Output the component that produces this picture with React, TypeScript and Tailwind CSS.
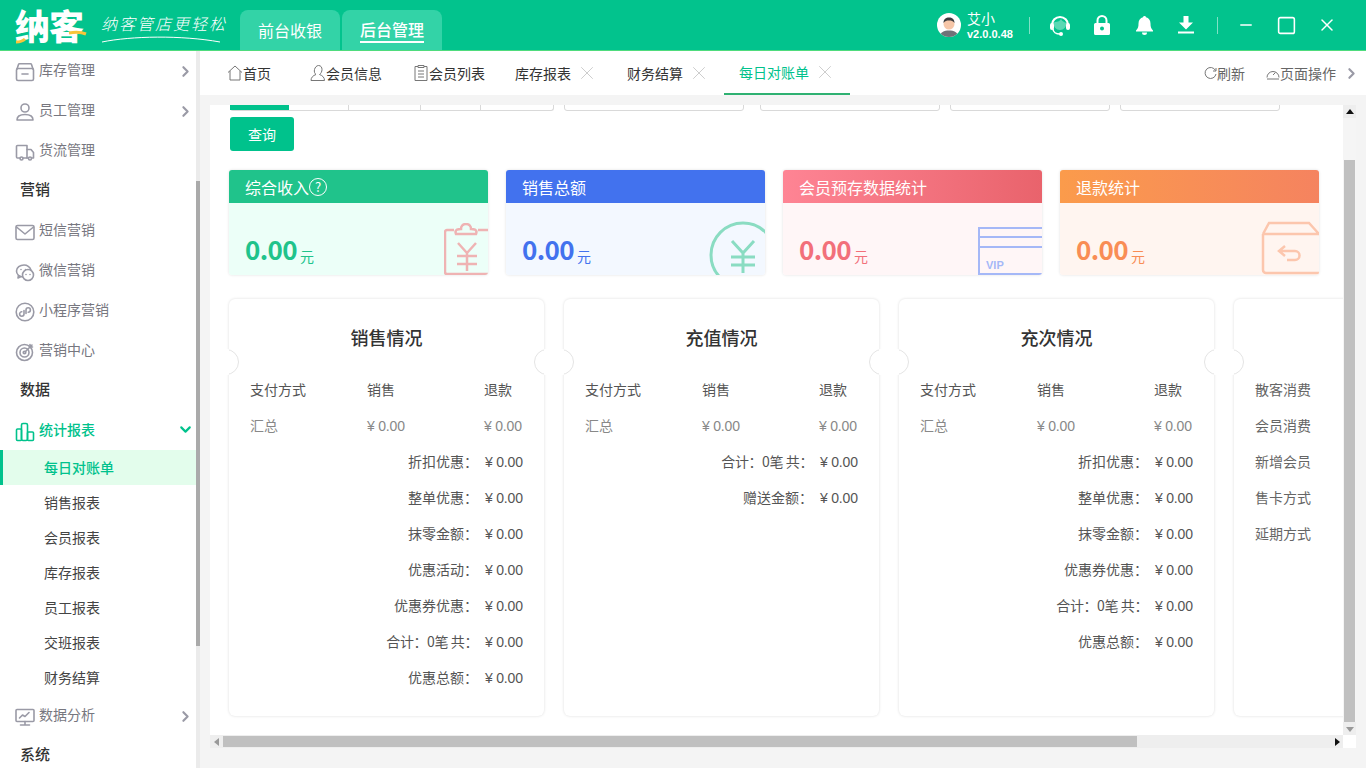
import React from 'react';
import { ChevronDown, ChevronRight, Minus, Square, X } from 'lucide-react';

const FONT = "font-['Noto_Sans_CJK_SC','Microsoft_YaHei',sans-serif]";

/* sidebar icons */
const Ico: React.FC<{ children: React.ReactNode; color?: string }> = ({ children, color = '#9a9aa6' }) => (
  <svg width="20" height="20" viewBox="0 0 20 20" fill="none" stroke={color} strokeWidth="1.6" strokeLinecap="round" strokeLinejoin="round">
    {children}
  </svg>
);

const sideIcons: Record<string, React.ReactNode> = {
  box: (
    <Ico>
      <path d="M2 7l1.5-4.500a1 1 0 011-.7h11a1 1 0 011 .7L18 7" />
      <rect x="1.500" y="6.500" width="17" height="12" rx="1.500" />
      <path d="M7 12h6" />
    </Ico>
  ),
  user: (
    <Ico>
      <circle cx="10" cy="6" r="4" />
      <path d="M2 18c0-3.500 3-5.500 8-5.500s8 2 8 5.500z" />
    </Ico>
  ),
  truck: (
    <Ico>
      <path d="M5 16H2.500a1 1 0 01-1-1V4.500a1 1 0 011-1H12v12.500H8" />
      <path d="M12 7.500h4l2.500 3V16h-2M12 16h1" />
      <circle cx="6.500" cy="16.500" r="1.500" />
      <circle cx="15" cy="16.500" r="1.500" />
    </Ico>
  ),
  mail: (
    <Ico>
      <rect x="1" y="3.500" width="18" height="14" rx="1.500" />
      <path d="M1.500 5l8.500 7 8.500-7" />
    </Ico>
  ),
  wechat: (
    <Ico>
      <path d="M7.500 15C4 14.500 1.500 12 1.500 9 1.500 5.500 5 3 9 3c3 0 5.800 2 7 5" />
      <path d="M3.500 13.500L3 16l2.500-1.300" />
      <circle cx="13" cy="13" r="5.500" />
      <path d="M11 12.500h.01M15 12.500h.01M6 7.500h.01M10.500 7.500h.01" />
    </Ico>
  ),
  mini: (
    <Ico>
      <circle cx="10" cy="10" r="8.800" />
      <path d="M9 8.500v3.500a2.200 2.200 0 11-2.200-2.200M11 11.500V8a2.200 2.200 0 112.200 2.200" />
    </Ico>
  ),
  target: (
    <Ico>
      <circle cx="9.500" cy="10.500" r="8" />
      <circle cx="9.500" cy="10.500" r="4.500" />
      <circle cx="9.500" cy="10.500" r="1.300" />
      <path d="M10 10L17 3M15 2.500V5h2.500" />
    </Ico>
  ),
  chart: (
    <Ico color="#00c28c">
      <rect x="1.500" y="7" width="5" height="11.500" rx="1" />
      <rect x="6.500" y="1.500" width="6" height="17" rx="1.500" />
      <rect x="12.500" y="10" width="6" height="8.500" rx="1" />
    </Ico>
  ),
  monitor: (
    <Ico>
      <rect x="1" y="2.500" width="18" height="12" rx="1" />
      <path d="M10 14.500v3.500M5.500 18h9M4.500 11l3-3 2.500 1.500L14 5.500" />
    </Ico>
  ),
};

type SideRow =
  | { kind: 'item'; label: string; icon: string; arrow?: boolean; open?: boolean }
  | { kind: 'head'; label: string }
  | { kind: 'sub'; label: string; active?: boolean };

const sideRows: SideRow[] = [
  { kind: 'item', label: '库存管理', icon: 'box', arrow: true },
  { kind: 'item', label: '员工管理', icon: 'user', arrow: true },
  { kind: 'item', label: '货流管理', icon: 'truck' },
  { kind: 'head', label: '营销' },
  { kind: 'item', label: '短信营销', icon: 'mail' },
  { kind: 'item', label: '微信营销', icon: 'wechat' },
  { kind: 'item', label: '小程序营销', icon: 'mini' },
  { kind: 'item', label: '营销中心', icon: 'target' },
  { kind: 'head', label: '数据' },
  { kind: 'item', label: '统计报表', icon: 'chart', open: true },
  { kind: 'sub', label: '每日对账单', active: true },
  { kind: 'sub', label: '销售报表' },
  { kind: 'sub', label: '会员报表' },
  { kind: 'sub', label: '库存报表' },
  { kind: 'sub', label: '员工报表' },
  { kind: 'sub', label: '交班报表' },
  { kind: 'sub', label: '财务结算' },
  { kind: 'item', label: '数据分析', icon: 'monitor', arrow: true },
  { kind: 'head', label: '系统' },
];

const Sidebar = () => (
  <div className="flex w-[200px] h-full shrink-0 overflow-hidden">
    <div className="w-[196px] h-full bg-white overflow-hidden shrink-0">
      <div className="-mt-px">
        {sideRows.map((row) => {
          if (row.kind === 'head') {
            return (
              <div key={row.label} className="h-10 pl-5 pb-[2px] flex items-center text-[15px] font-medium text-[#333]">
                {row.label}
              </div>
            );
          }
          if (row.kind === 'sub') {
            return (
              <div
                key={row.label}
                className={
                  row.active
                    ? 'h-[35px] pl-[41px] pb-[2px] flex items-center text-sm font-medium text-[#00c28c] bg-[#e3fdec] border-l-[3px] border-[#00c28c]'
                    : 'h-[35px] pl-11 pb-[2px] flex items-center text-sm text-[#444]'
                }
              >
                {row.label}
              </div>
            );
          }
          return (
            <div key={row.label} className="h-10 pl-[15px] pr-[2px] pb-[2px] flex items-center">
              <span className="pt-[6px]">{sideIcons[row.icon]}</span>
              <span className={row.open ? 'ml-1 text-sm font-medium text-[#00c28c]' : 'ml-1 text-sm text-[#77777f]'}>{row.label}</span>
              {row.arrow && (
                <span className="ml-auto pt-[4px]">
                  <ChevronRight className="text-[#9a9aa6]" size={17} strokeWidth={3} />
                </span>
              )}
              {row.open && <ChevronDown className="ml-auto text-[#00c28c]" size={17} strokeWidth={3} />}
            </div>
          );
        })}
      </div>
    </div>
    <div className="w-1 h-full bg-[#ebebeb] pt-[130px]">
      <div className="w-1 h-[465px] bg-[#aaaaaa]" />
    </div>
  </div>
);

const HeaderBar = () => (
  <div className="h-[51px] bg-[#02c38d] border-b border-[#4fdc7d] flex items-stretch text-white shrink-0">
    {/* logo */}
    <div className="w-[240px] shrink-0 flex items-center pl-[15px]">
      <div className="relative w-[72px] h-[40px]">
        <span className="text-[35px] leading-[40px] font-black tracking-[-1px] text-white">纳客</span>
        <svg className="absolute left-0 top-0" width="72" height="40" viewBox="0 0 72 40" fill="none">
          <path d="M1 37c4 0 7-1 9-3" stroke="#f8c53a" strokeWidth="3" />
          <path d="M54 28c6-1 12-1 17 1" stroke="#f8c53a" strokeWidth="3" />
        </svg>
      </div>
      <div className="ml-[14px] relative w-[125px] h-[40px]">
        <span className="absolute left-0 top-[6px] whitespace-nowrap text-[16px] leading-[24px] font-light italic tracking-[2px] text-white">纳客管店更轻松</span>
        <svg className="absolute left-0 top-[30px]" width="125" height="10" viewBox="0 0 125 10" fill="none">
          <path d="M1 7C30 1 80 0 119 7" stroke="white" strokeWidth="1" />
        </svg>
      </div>
    </div>
    {/* nav */}
    <div className="flex items-end gap-[2px]">
      <div className="w-[100px] h-10 rounded-t-lg bg-[#33d3a7] flex items-center justify-center text-base">前台收银</div>
      <div className="w-[100px] h-10 rounded-t-lg bg-[#33d3a7] flex items-center justify-center">
        <span className="text-base font-medium border-b-2 border-white leading-[24px]">后台管理</span>
      </div>
    </div>
    {/* right side */}
    <div className="flex items-center ml-[495px]">
      <div className="w-6 h-6 rounded-full bg-white overflow-hidden shrink-0">
        <svg width="24" height="24" viewBox="0 0 24 24">
          <path d="M3 24c0-5 4-6.500 9-6.500s9 1.500 9 6.500z" fill="#6f7278" />
          <circle cx="12" cy="11" r="5.500" fill="#f6c6a8" />
          <path d="M6.500 10c0-4 2.500-5.500 5.500-5.500s5.500 1.500 5.500 5.500c-1.500-2-3-2.500-5.500-2.500s-4 .5-5.500 2.500z" fill="#3b3b3f" />
        </svg>
      </div>
      <div className="ml-[6px] w-[62px]">
        <div className="text-sm leading-[18px]">艾小</div>
        <div className="text-[11px] font-bold leading-[15px] font-['Liberation_Sans',sans-serif]">v2.0.0.48</div>
      </div>
      <div className="w-px h-[17px] bg-white/50" />
      <div className="w-[42px] ml-[9px] flex justify-center">
        <svg width="22" height="24" viewBox="0 0 22 24" fill="none">
          <path d="M3 12a8 8 0 0116 0" stroke="white" strokeWidth="2.200" />
          <path d="M6 9c3 0 5-1 6-3 1 2 3 3.500 6 4-1 4-3 7-7 7-4 0-6-3-7-7z" fill="white" fillOpacity="0.35" />
          <rect x="1" y="10" width="4" height="7" rx="2" fill="white" />
          <rect x="17" y="10" width="4" height="7" rx="2" fill="white" />
          <path d="M4 16c0 3 3 5 7 5" stroke="white" strokeWidth="1.500" />
          <circle cx="12" cy="21" r="2" fill="white" />
        </svg>
      </div>
      <div className="w-[42px] flex justify-center">
        <svg width="16" height="20" viewBox="0 0 16 20" fill="none">
          <path d="M3.500 9V5.500a4.500 4.500 0 019 0V9" stroke="white" strokeWidth="2" />
          <path fillRule="evenodd" clipRule="evenodd" d="M1.500 8h13A1.500 1.500 0 0116 9.500v9a1.500 1.500 0 01-1.500 1.500h-13A1.500 1.500 0 010 18.500v-9A1.500 1.500 0 011.500 8zM8 11.500a2 2 0 100 4 2 2 0 000-4z" fill="white" />
        </svg>
      </div>
      <div className="w-[42px] flex justify-center">
        <svg width="17" height="19" viewBox="0 0 17 19" fill="white">
          <path d="M8.500 0a1.500 1.500 0 011.500 1.300C12.800 2 14.500 4.500 14.500 7.500c0 3.500.5 5 2.500 7v1H0v-1c2-2 2.500-3.500 2.500-7C2.500 4.500 4.200 2 7 1.300A1.500 1.500 0 018.500 0z" />
          <path d="M6 16.500h5a2.500 2.500 0 01-5 0z" />
        </svg>
      </div>
      <div className="w-[42px] flex justify-center">
        <svg width="16" height="18" viewBox="0 0 16 18" fill="white">
          <path d="M5.500 0h5v6.500H15L8 13.500 1 6.500h4.500z" />
          <rect x="0" y="15.500" width="16" height="2" />
        </svg>
      </div>
      <div className="ml-[10px] w-px h-[17px] bg-white/50" />
      <div className="w-[56px] flex justify-center">
        <Minus size={18} strokeWidth={1.800} />
      </div>
      <div className="w-[24px] flex justify-center">
        <Square size={21} strokeWidth={1.800} />
      </div>
      <div className="w-[58px] flex justify-center">
        <X size={20} strokeWidth={1.800} />
      </div>
    </div>
  </div>
);

const TabIcon: React.FC<{ name: string }> = ({ name }) => (
  <svg width="16" height="18" viewBox="0 0 16 18" fill="none" stroke="#777" strokeWidth="1">
    {name === 'home' && <path d="M1 8.500L8 2l7 6.500M3 7v9h10V7" />}
    {name === 'user' && <path d="M8.500 1.500c2.500 0 3.500 2 3.500 4s-1 4-2.500 5c3 1 5 3 5 6H1c0-3 2-5 5-6C4.500 9.500 4 7.500 4.500 5.500s2-4 4-4z" />}
    {name === 'list' && <path d="M5 2.500H2v14h12v-14h-3M5 1.500h6v2H5zM5 7h6M5 10h6M5 13h6" />}
  </svg>
);

const TabBar = () => (
  <div className="h-11 bg-white flex items-stretch text-sm text-[#333] shrink-0">
    <div className="ml-[27px] flex items-center">
      <TabIcon name="home" />
      首页
    </div>
    <div className="ml-[39px] flex items-center">
      <TabIcon name="user" />
      会员信息
    </div>
    <div className="ml-[31px] flex items-center">
      <TabIcon name="list" />
      会员列表
    </div>
    <div className="ml-[30px] flex items-center gap-[5px]">
      库存报表
      <X size={22} strokeWidth={0.800} className="text-[#bbb]" />
    </div>
    <div className="ml-[29px] flex items-center gap-[5px]">
      财务结算
      <X size={22} strokeWidth={0.800} className="text-[#bbb]" />
    </div>
    <div className="ml-[14px] w-[126px] pl-[15px] flex items-center gap-[5px] text-[#00c28c] border-b-2 border-[#2fb172]">
      每日对账单
      <X size={22} strokeWidth={0.800} className="text-[#bbb]" />
    </div>
    <div className="ml-auto flex items-center text-[#666]">
      <svg width="13" height="13" viewBox="0 0 13 13" fill="none" stroke="#777" strokeWidth="1">
        <path d="M11.500 3.500A5.500 5.500 0 1012 7M12 1v3H9" />
      </svg>
      <span>刷新</span>
      <svg className="ml-[21px]" width="14" height="13" viewBox="0 0 14 13" fill="none" stroke="#777" strokeWidth="1">
        <path d="M1 10.500a6 6 0 1112 0M7 8l2.500-2.500M1 12h12" />
      </svg>
      <span>页面操作</span>
      <ChevronRight className="ml-[7px] mr-[6px] text-[#9a9aa6]" size={17} strokeWidth={3} />
    </div>
  </div>
);

const Clipboard = () => (
  <svg width="44" height="52" viewBox="0 0 44 52" fill="none" stroke="#efb3b3" strokeWidth="2.500">
    <path d="M10 7H3a2 2 0 00-2 2v40a2 2 0 002 2h42M34 7h12" />
    <path d="M12 11c-2-5 3-5 5-5 0-3 2-5 5-5s5 2 5 5c2 0 7 0 5 5z" />
    <path d="M14 20l9 10 9-10M23 30v18M13 33h20M13 41h20" />
  </svg>
);

const Coin = () => (
  <svg width="56" height="54" viewBox="0 0 56 54" fill="none" stroke="#8adcc2" strokeWidth="3">
    <circle cx="34" cy="34" r="32" />
    <path d="M23 20l11 12 11-12M34 32v20M22 36h24M22 44h24" />
  </svg>
);

const VipCard = () => (
  <svg width="64" height="48" viewBox="0 0 64 48" fill="none" stroke="#a5b8f7" strokeWidth="2">
    <path d="M64 1H1v46h63M1 10h63M1 20h63" />
  </svg>
);

const ReturnBox = () => (
  <svg width="58" height="54" viewBox="0 0 58 54" fill="none" stroke="#fcc6ad" strokeWidth="2.500">
    <path d="M2 13L8 2h40l10 11M2 13h56M2 13v36a3 3 0 003 3h53" />
    <path d="M24 25l-6 5 6 5M18 30h16a4.500 4.500 0 010 9h-8" />
  </svg>
);

interface StatCardProps {
  title: string;
  headClass: string;
  bodyClass: string;
  valueClass: string;
  help?: boolean;
  art: React.ReactNode;
}

const statCards: StatCardProps[] = [
  { title: '综合收入', headClass: 'bg-[#20c38b]', bodyClass: 'bg-[#ecfff8]', valueClass: 'text-[#20c38b]', help: true, art: <Clipboard /> },
  { title: '销售总额', headClass: 'bg-[#4272ee]', bodyClass: 'bg-[#f3f8ff]', valueClass: 'text-[#4272ee]', art: <Coin /> },
  { title: '会员预存数据统计', headClass: 'bg-gradient-to-r from-[#fe8494] to-[#e9636c]', bodyClass: 'bg-[#fff6f7]', valueClass: 'text-[#f2707a]', art: <VipCard /> },
  { title: '退款统计', headClass: 'bg-gradient-to-r from-[#fb9b4b] to-[#f5835f]', bodyClass: 'bg-[#fff5f0]', valueClass: 'text-[#f98d55]', art: <ReturnBox /> },
];

const StatCard: React.FC<StatCardProps> = ({ title, headClass, bodyClass, valueClass, help, art }) => (
  <div className="w-[259px] h-[105px] rounded-[3px] overflow-hidden shadow-[0_0_3px_rgba(0,0,0,0.12)] shrink-0">
    <div className={`h-[33px] pl-4 flex items-center text-base text-white ${headClass}`}>
      {title}
      {help && <span className="w-[18px] h-[18px] rounded-full border border-white flex items-center justify-center text-[13px] leading-none">?</span>}
    </div>
    <div className={`relative h-[72px] pl-4 pt-[26px] flex items-baseline ${bodyClass} ${valueClass}`}>
      <span className="text-[26px] leading-[40px] font-bold tracking-[-0.6px]">0.00</span>
      <span className="ml-[3px] text-sm translate-y-[2px]">元</span>
      <div className="absolute right-0 bottom-0">{art}</div>
      {title === '会员预存数据统计' && (
        <span className="absolute left-[203px] bottom-[2px] text-[11px] font-bold text-[#a5b8f7] font-['Liberation_Sans',sans-serif]">VIP</span>
      )}
    </div>
  </div>
);

const salesRows = ['折扣优惠：', '整单优惠：', '抹零金额：', '优惠活动：', '优惠券优惠：', '合计：0笔 共：', '优惠总额：'];
const rechargeRows = ['合计：0笔 共：', '赠送金额：'];
const timesRows = ['折扣优惠：', '整单优惠：', '抹零金额：', '优惠券优惠：', '合计：0笔 共：', '优惠总额：'];

const Yuan: React.FC<{ className?: string }> = ({ className }) => (
  <span className={`whitespace-nowrap pt-[2px] tracking-[-0.2px] font-['Liberation_Sans','Noto_Sans_CJK_SC',sans-serif] ${className ?? ''}`}>¥ 0.00</span>
);

// half moons on both edges: white outside the card, ringed only inside it
const Notches = () => (
  <>
    <div className="absolute left-[-16px] top-[50px] w-[26px] h-[26px] rounded-full bg-white" />
    <div className="absolute right-[-16px] top-[50px] w-[26px] h-[26px] rounded-full bg-white" />
    <div className="absolute inset-0 overflow-hidden rounded-md">
      <div className="absolute left-[-16px] top-[50px] w-[26px] h-[26px] rounded-full bg-white border border-[#e4e4e4]" />
      <div className="absolute right-[-16px] top-[50px] w-[26px] h-[26px] rounded-full bg-white border border-[#e4e4e4]" />
    </div>
  </>
);

const ReportCard: React.FC<{ title: string; rows: string[] }> = ({ title, rows }) => (
  <div className="relative w-[315px] h-[417px] rounded-md bg-white shadow-[0_0_3px_rgba(0,0,0,0.14)] shrink-0">
    <Notches />
    <div className="relative pl-[21px] pr-[21px] pt-[19px]">
      <div className="h-[38px] flex items-center justify-center text-lg font-medium text-[#333]">{title}</div>
      <div className="mt-[15px] grid grid-cols-[117px_117px_1fr] h-9 items-center text-sm text-[#555]">
        <span>支付方式</span>
        <span>销售</span>
        <span>退款</span>
      </div>
      <div className="grid grid-cols-[117px_117px_1fr] h-9 items-center text-sm text-[#888]">
        <span>汇总</span>
        <Yuan />
        <Yuan />
      </div>
      {rows.map((label) => (
        <div key={label} className="h-9 flex items-center justify-end text-sm text-[#555]">
          <span className={label.startsWith('合计') ? 'tracking-[-0.4px]' : ''}>{label}</span>
          <Yuan className="ml-[7px] w-[38px]" />
        </div>
      ))}
    </div>
  </div>
);

const ExtraCard = () => (
  <div className="relative w-[315px] h-[417px] rounded-md bg-white shadow-[0_0_3px_rgba(0,0,0,0.14)] shrink-0">
    <Notches />
    <div className="relative pl-[21px] pt-[72px]">
      {['散客消费', '会员消费', '新增会员', '售卡方式', '延期方式'].map((label) => (
        <div key={label} className="h-9 flex items-center text-sm text-[#666]">
          {label}
        </div>
      ))}
    </div>
  </div>
);

const Arrow: React.FC<{ dir: 'up' | 'down' | 'left' | 'right'; gray?: boolean }> = ({ dir, gray }) => (
  <svg width="8" height="8" viewBox="0 0 8 8" fill={gray ? '#999' : '#111'}>
    {dir === 'up' && <path d="M0 6h8L4 1z" />}
    {dir === 'down' && <path d="M0 2h8L4 7z" />}
    {dir === 'left' && <path d="M6 0v8L1 4z" />}
    {dir === 'right' && <path d="M2 0v8l5-4z" />}
  </svg>
);

const Content = () => (
  <div className="flex-1 min-h-0 ml-[10px] mr-[10px] mt-[10px] mb-5 flex flex-col">
    <div className="flex-1 min-h-0 flex">
      <div className="flex-1 min-w-0 bg-white overflow-hidden">
        <div className="-mt-[28px]">
          {/* filter row, scrolled mostly out of view */}
          <div className="h-[34px] ml-5 flex">
            <div className="w-[324px] h-full flex rounded-[3px] border-b border-r border-[#d9d9d9]">
              <div className="w-[59px] shrink-0 bg-[#00c28c]" />
              <div className="w-[60px] shrink-0 border-r border-[#d9d9d9]" />
              <div className="w-[72px] shrink-0 border-r border-[#d9d9d9]" />
              <div className="w-[60px] shrink-0 border-r border-[#d9d9d9]" />
              <div className="w-[72px] shrink-0" />
            </div>
            <div className="ml-[10px] w-[180px] rounded-[3px] border border-[#d9d9d9]" />
            <div className="ml-4 w-[180px] rounded-[3px] border border-[#d9d9d9]" />
            <div className="ml-[10px] w-[160px] rounded-[3px] border border-[#d9d9d9]" />
            <div className="ml-[10px] w-[160px] rounded-[3px] border border-[#d9d9d9]" />
          </div>
          <div className="ml-5 mt-[6px] w-16 h-[34px] rounded-[3px] bg-[#00c28c] text-white text-sm flex items-center justify-center">查询</div>
          <div className="ml-[19px] mt-[19px] flex gap-[18px]">
            {statCards.map((c) => (
              <StatCard key={c.title} {...c} />
            ))}
          </div>
          <div className="ml-[19px] mt-6 flex gap-5">
            <ReportCard title="销售情况" rows={salesRows} />
            <ReportCard title="充值情况" rows={rechargeRows} />
            <ReportCard title="充次情况" rows={timesRows} />
            <ExtraCard />
          </div>
        </div>
      </div>
      {/* vertical scrollbar */}
      <div className="w-[13px] bg-[#f5f5f5] flex flex-col shrink-0">
        <div className="h-[13px] bg-[#eeeeee] flex items-center justify-center">
          <Arrow dir="up" />
        </div>
        <div className="h-[42px]" />
        <div className="mx-px flex-1 bg-[#c0c0c0]" />
        <div className="h-[13px] bg-[#eeeeee] flex items-center justify-center">
          <Arrow dir="down" gray />
        </div>
      </div>
    </div>
    {/* horizontal scrollbar */}
    <div className="h-[13px] flex shrink-0">
      <div className="flex-1 flex bg-[#eeeeee]">
        <div className="w-[13px] flex items-center justify-center">
          <Arrow dir="left" gray />
        </div>
        <div className="my-px w-[914px] bg-[#c0c0c0]" />
        <div className="ml-auto w-[13px] flex items-center justify-center">
          <Arrow dir="right" />
        </div>
      </div>
      <div className="w-[13px] bg-white" />
    </div>
  </div>
);

export default function App() {
  return (
    <div className={`w-[1366px] h-[768px] overflow-hidden flex flex-col bg-[#f4f4f4] ${FONT}`}>
      <HeaderBar />
      <div className="flex-1 min-h-0 flex">
        <Sidebar />
        <div className="flex-1 min-w-0 flex flex-col">
          <TabBar />
          <Content />
        </div>
      </div>
    </div>
  );
}
